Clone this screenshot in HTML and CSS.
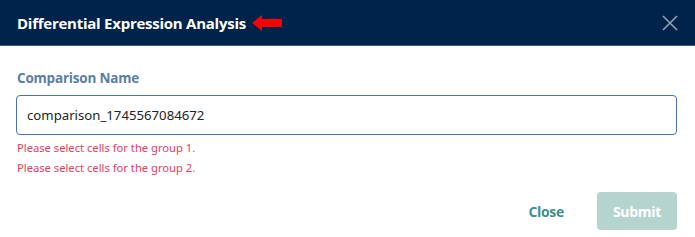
FILE: index.html
```html
<!DOCTYPE html>
<html>
<head>
<meta charset="utf-8">
<link rel="stylesheet" href="styles.css">
</head>
<body>
<div class="modal">
  <div class="modal-header">
    <div class="title-wrap">
      <h1 class="title">Differential Expression Analysis</h1>
      <svg class="arrow" width="30" height="16" viewBox="0 0 30 16"><polygon points="0,8 10,0 10,4 30,4 30,12 10,12 10,16" fill="#ff0000"/></svg>
    </div>
    <svg class="close-x" width="16" height="16" viewBox="0 0 16 16"><path d="M1 1 L15 15 M15 1 L1 15" stroke="#8fa0b5" stroke-width="1.6" fill="none"/></svg>
  </div>
  <div class="modal-body">
    <label class="field-label">Comparison Name</label>
    <div class="input">comparison_1745567084672</div>
    <div class="errors">
      <div class="error">Please select cells for the group 1.</div>
      <div class="error">Please select cells for the group 2.</div>
    </div>
  </div>
  <div class="modal-footer">
    <button class="btn-close">Close</button>
    <button class="btn-submit">Submit</button>
  </div>
</div>
</body>
</html>
```
FILE: styles.css
```css
* { box-sizing: border-box; }
html, body { margin: 0; padding: 0; background: #fff; }
body { font-family: "Open Sans", "Noto Sans", sans-serif; width: 695px; height: 237px; overflow: hidden; }
.modal { width: 695px; }
.modal-header {
  height: 46px;
  background: #00234b;
  border-bottom: 1px solid #3d5a80;
  display: flex;
  align-items: center;
  justify-content: space-between;
  padding: 0 17px 0 17px;
}
.title-wrap { display: flex; align-items: center; gap: 6px; }
.title { margin: 0; color: #fff; font-size: 15px; font-weight: 700; letter-spacing: -0.25px; }
.arrow { display: block; margin-top: 1px; }
.close-x { display: block; margin-right: 0; }
.modal-body { padding: 22px 18px 0 16px; }
.field-label { display: block; color: #5a7ea8; font-weight: 700; font-size: 13.5px; letter-spacing: -0.2px; margin-left: 1px; height: 20px; line-height: 20px; }
.input {
  margin-top: 7px;
  height: 40px;
  border: 1px solid #4a74b0;
  border-radius: 4px;
  padding: 0 10px;
  display: flex;
  align-items: center;
  font-size: 13.2px;
  color: #212529;
  font-family: "Noto Sans", sans-serif;
}
.errors { padding-top: 3px; }
.error { color: #e5405e; font-size: 11.2px; line-height: 20px; margin-left: 1px; font-family: "Noto Sans", sans-serif; }
.modal-footer { display: flex; justify-content: flex-end; align-items: center; gap: 33px; padding: 14px 18px 0 0; }
.btn-close { background: none; border: none; color: #3f8f92; font-weight: 700; font-size: 14px; font-family: "Open Sans", sans-serif; padding: 0; letter-spacing: -0.3px; }
.btn-submit { background: #b5d4ce; border: none; border-radius: 4px; color: #fff; font-weight: 700; font-size: 14px; font-family: "Open Sans", sans-serif; width: 80px; height: 38px; padding: 0; letter-spacing: -0.3px; }
```
